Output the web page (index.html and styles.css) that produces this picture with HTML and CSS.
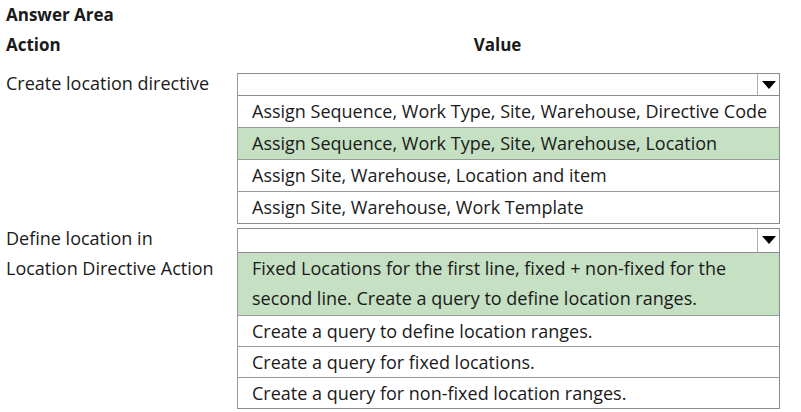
FILE: index.html
```html
<!DOCTYPE html>
<html>
<head>
<meta charset="utf-8">
<link rel="stylesheet" href="styles.css">
</head>
<body>
<div class="page">
  <div class="title">Answer Area</div>
  <div class="heads">
    <div class="h-action">Action</div>
    <div class="h-value">Value</div>
  </div>
  <div class="section">
    <div class="label">Create location directive</div>
    <div class="box">
      <div class="select"><div class="sel-empty"></div><div class="arrow"></div></div>
      <div class="opt">Assign Sequence, Work Type, Site, Warehouse, Directive Code</div>
      <div class="opt sel">Assign Sequence, Work Type, Site, Warehouse, Location</div>
      <div class="opt">Assign Site, Warehouse, Location and item</div>
      <div class="opt">Assign Site, Warehouse, Work Template</div>
    </div>
  </div>
  <div class="section second">
    <div class="label">Define location in<br>Location Directive Action</div>
    <div class="box">
      <div class="select"><div class="sel-empty"></div><div class="arrow"></div></div>
      <div class="opt sel multi">Fixed Locations for the first line, fixed + non-fixed for the<br>second line. Create a query to define location ranges.</div>
      <div class="opt">Create a query to define location ranges.</div>
      <div class="opt">Create a query for fixed locations.</div>
      <div class="opt">Create a query for non-fixed location ranges.</div>
    </div>
  </div>
</div>
</body>
</html>
```

FILE: styles.css
```css
html, body {
  margin: 0;
  padding: 0;
  background: #ffffff;
}
body {
  font-family: "Open Sans", "Noto Sans", sans-serif;
  font-size: 18px;
  color: #1a1a1a;
}
.page {
  width: 801px;
  height: 412px;
  overflow: hidden;
}
.title {
  font-weight: bold;
  font-size: 17px;
  height: 30px;
  line-height: 30px;
  padding-left: 6px;
}
.heads {
  display: grid;
  grid-template-columns: 237px 543px;
  height: 30px;
  line-height: 30px;
  font-weight: bold;
  font-size: 17px;
}
.h-action { padding-left: 6px; }
.h-value { text-align: center; padding-right: 22px; }
.section {
  display: grid;
  grid-template-columns: 237px 543px;
  margin-top: 13px;
  align-items: start;
}
.section.second { margin-top: 4px; }
.label {
  padding-left: 6px;
  line-height: 30px;
  margin-top: -5px;
}
.box {
  border: 1px solid #8c8c8c;
  border-left-color: #9a9a9a;
}
.select {
  display: flex;
  height: 21px;
  border-bottom: 1px solid #8c8c8c;
}
.second .select { height: 23px; }
.sel-empty { flex: 1; }
.arrow {
  width: 21px;
  border-left: 1px solid #b0b0b0;
  position: relative;
}
.arrow::after {
  content: "";
  position: absolute;
  left: 4px;
  top: 7px;
  border-left: 7px solid transparent;
  border-right: 7px solid transparent;
  border-top: 8px solid #000;
}
.opt {
  height: 31px;
  line-height: 31px;
  padding-left: 14px;
  border-bottom: 1px solid #9a9a9a;
  white-space: nowrap;
}
.second .opt {
  height: 30px;
  line-height: 30px;
}
.opt:last-child { border-bottom: none; }
.opt.sel { background: #c5e0c3; }
.second .opt.multi {
  height: 62px;
  line-height: 30px;
}
```
